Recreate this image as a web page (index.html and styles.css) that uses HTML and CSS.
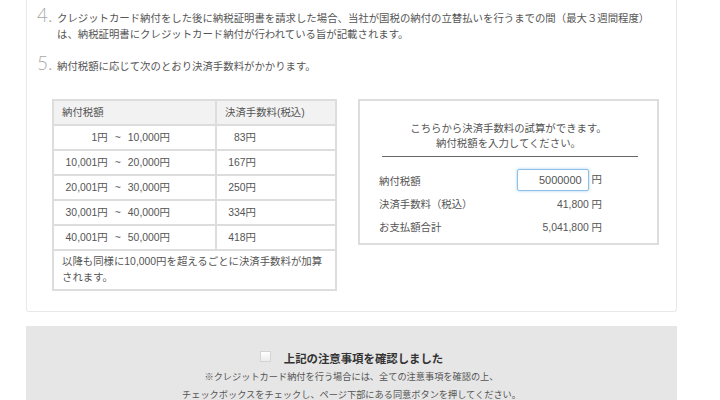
FILE: index.html
```html
<!DOCTYPE html>
<html lang="ja">
<head>
<meta charset="utf-8">
<title>クレジットカード納付の注意事項</title>
<link rel="stylesheet" href="styles.css">
</head>
<body>
<div class="card">
  <div class="item">
    <span class="num">4.</span>
    <p class="txt">クレジットカード納付をした後に納税証明書を請求した場合、当社が国税の納付の立替払いを行うまでの間（最大３週間程度）は、納税証明書にクレジットカード納付が行われている旨が記載されます。</p>
  </div>
  <div class="item item5">
    <span class="num">5.</span>
    <p class="txt">納付税額に応じて次のとおり決済手数料がかかります。</p>
  </div>
  <div class="fees">
    <table class="fee-table">
      <colgroup><col class="c1"><col class="c2"></colgroup>
      <tr class="head"><td>納付税額</td><td>決済手数料(税込)</td></tr>
      <tr><td><span class="range">1円<span class="sep">~</span>10,000円</span></td><td><span class="fee">83円</span></td></tr>
      <tr><td><span class="range">10,001円<span class="sep">~</span>20,000円</span></td><td><span class="fee">167円</span></td></tr>
      <tr><td><span class="range">20,001円<span class="sep">~</span>30,000円</span></td><td><span class="fee">250円</span></td></tr>
      <tr><td><span class="range">30,001円<span class="sep">~</span>40,000円</span></td><td><span class="fee">334円</span></td></tr>
      <tr><td><span class="range">40,001円<span class="sep">~</span>50,000円</span></td><td><span class="fee">418円</span></td></tr>
      <tr class="note"><td colspan="2">以降も同様に10,000円を超えるごとに決済手数料が加算されます。</td></tr>
    </table>
    <div class="calc">
      <p class="intro">こちらから決済手数料の試算ができます。<br>納付税額を入力してください。</p>
      <hr class="rule">
      <div class="row r1"><span class="lbl">納付税額</span><span class="val"><input class="amount" type="text" value="5000000"> 円</span></div>
      <div class="row"><span class="lbl">決済手数料（税込）</span><span class="val">41,800 円</span></div>
      <div class="row"><span class="lbl">お支払額合計</span><span class="val">5,041,800 円</span></div>
    </div>
  </div>
</div>
<div class="confirm">
  <label class="check"><input type="checkbox" class="box"><span class="ctitle">上記の注意事項を確認しました</span></label>
  <p class="cnote">※クレジットカード納付を行う場合には、全ての注意事項を確認の上、<br>チェックボックスをチェックし、ページ下部にある同意ボタンを押してください。</p>
</div>
</body>
</html>
```
FILE: styles.css
```css
html, body {
  margin: 0;
  padding: 0;
  background: #fff;
}
body {
  font-family: "Liberation Sans", "Noto Sans CJK JP", sans-serif;
  font-size: 10.4px;
  color: #555;
}
.card {
  margin-left: 26px;
  width: 651px;
  box-sizing: border-box;
  border: 1px solid #e8e8e8;
  border-top: none;
  border-radius: 0 0 3px 3px;
  padding: 7px 14px 20px 10px;
}
.item {
  display: flex;
  align-items: baseline;
}
.item5 {
  margin-top: 12px;
}
.num {
  flex: 0 0 20px;
  font-family: "Lato", "Liberation Sans", sans-serif;
  font-weight: 300;
  font-size: 19px;
  line-height: 16px;
  color: #a8a8a8;
}
.txt {
  margin: 0;
  line-height: 16px;
  flex: 1;
}
.fees {
  display: flex;
  align-items: flex-start;
  gap: 21px;
  margin: 24px 0 0 15px;
}
.fee-table {
  flex: 0 0 auto;
  width: 285px;
  table-layout: fixed;
  border-collapse: collapse;
  border: 2px solid #ddd;
}
.c1 { width: 163px; }
.fee-table td {
  border: 2px solid #ddd;
  height: 23px;
  padding: 0 8px;
  line-height: 16px;
}
.head td {
  background: #f2f2f2;
}
.range {
  display: inline-block;
  width: 108px;
  text-align: right;
  white-space: nowrap;
}
.sep {
  margin: 0 7px;
}
.fee {
  display: inline-block;
  width: 31px;
  text-align: right;
}
.note td {
  padding: 3px 4px 3px 8px;
  height: auto;
}
.calc {
  flex: 0 0 auto;
  width: 301px;
  box-sizing: border-box;
  border: 2px solid #ddd;
  padding: 20px 19px 5px 19px;
}
.intro {
  margin: 0;
  text-align: center;
  line-height: 15px;
}
.rule {
  margin: 5px 0 11px 3px;
  border: none;
  border-top: 1px solid #666;
}
.row {
  display: grid;
  grid-template-columns: 128px 95px;
  align-items: center;
  height: 23px;
}
.row.r1 {
  height: 24px;
}
.val {
  text-align: right;
}
.amount {
  width: 72px;
  height: 22px;
  box-sizing: border-box;
  border: 1px solid #8fbfe6;
  border-radius: 2px;
  box-shadow: 0 0 3px rgba(102, 175, 233, 0.6);
  padding: 0 6px;
  font: inherit;
  font-size: 11px;
  color: #555;
  text-align: right;
  vertical-align: middle;
  outline: none;
}
.confirm {
  margin: 14px 0 0 26px;
  width: 651px;
  box-sizing: border-box;
  background: #e6e6e6;
  padding: 22px 0 20px;
  text-align: center;
}
.check {
  display: inline-flex;
  align-items: center;
  gap: 13px;
}
.box {
  appearance: none;
  -webkit-appearance: none;
  margin: 0 0 4px;
  width: 11px;
  height: 11px;
  border: 1px solid #d4d4d4;
  background: linear-gradient(#fff, #ececec);
}
.ctitle {
  font-family: "Noto Sans CJK JP", sans-serif;
  font-weight: bold;
  font-size: 11.4px;
  line-height: 20px;
  color: #333;
}
.cnote {
  margin: 0;
  font-size: 9.2px;
  line-height: 18px;
  color: #555;
}
```
